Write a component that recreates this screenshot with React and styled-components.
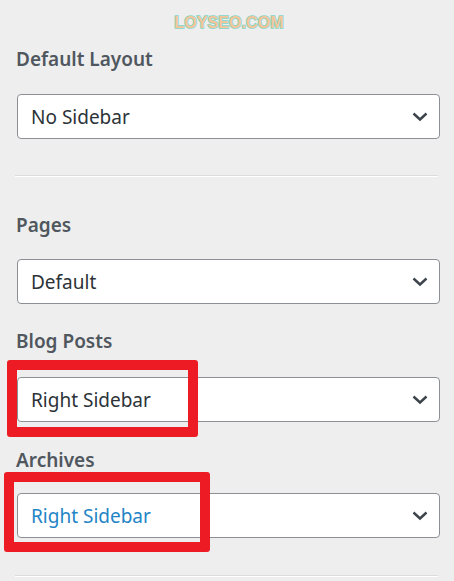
import React from 'react';
import styled, { createGlobalStyle } from 'styled-components';

const GlobalStyle = createGlobalStyle`
  html, body {
    margin: 0;
    padding: 0;
    background: #eeeeee;
  }
  body {
    font-family: "Noto Sans", "Open Sans", sans-serif;
  }
`;

const Panel = styled.div`
  width: 454px;
  height: 581px;
  overflow: hidden;
  padding: 0 14px 0 16px;
  box-sizing: border-box;
  display: flex;
  flex-direction: column;
`;

const Watermark = styled.div`
  height: 46px;
  display: flex;
  align-items: center;
  justify-content: center;
  padding-left: 2px;
  font-family: "Liberation Sans", Arial, sans-serif;
  font-weight: 700;
  font-size: 16px;
  letter-spacing: 0.1px;
  color: #f5c69a;
  -webkit-text-stroke: 1.6px #83d5c6;
  paint-order: stroke fill;
`;

const Section = styled.div`
  display: flex;
  flex-direction: column;
  padding-top: ${(p) => p.$top || 0}px;
`;

const Label = styled.div`
  font-size: 19px;
  font-weight: 600;
  color: #50575e;
  line-height: 26px;
  margin-bottom: ${(p) => p.$gap || 16}px;
`;

const SelectWrap = styled.div`
  position: relative;
  margin-left: 1px;
`;

const SelectBox = styled.div`
  height: 45px;
  box-sizing: border-box;
  border: 1px solid #8c8f94;
  border-radius: 4px;
  background: #fff;
  display: flex;
  align-items: center;
  justify-content: space-between;
  padding: 0 11px 0 13px;
  font-size: 19px;
  color: ${(p) => (p.$active ? '#2384c6' : '#2c3338')};
`;

const Chevron = () => (
  <svg width="16" height="10" viewBox="0 0 16 10">
    <path d="M1.5 1.5 L8 7.5 L14.5 1.5" fill="none" stroke="#3c434a" strokeWidth="2.4" />
  </svg>
);

const Highlight = styled.div`
  position: absolute;
  left: ${(p) => p.$left}px;
  top: ${(p) => p.$top}px;
  width: ${(p) => p.$width}px;
  height: ${(p) => p.$height}px;
  border: 10px solid #ed1c24;
  border-radius: 3px;
  box-sizing: border-box;
  pointer-events: none;
`;

const Divider = styled.div`
  height: 1px;
  background: #dcdcde;
  border-bottom: 1px solid #ffffff;
  margin-left: -1px;
  margin-right: 2px;
  margin-top: ${(p) => p.$top}px;
`;

const Field = ({ label, value, active, top, gap, mark }) => (
  <Section $top={top}>
    <Label $gap={gap}>{label}</Label>
    <SelectWrap>
      <SelectBox $active={active}>
        <span>{value}</span>
        <Chevron />
      </SelectBox>
      {mark && <Highlight {...mark} />}
    </SelectWrap>
  </Section>
);

export default function App() {
  return (
    <>
      <GlobalStyle />
      <Panel>
        <Watermark>LOYSEO.COM</Watermark>
        <Field label="Default Layout" value="No Sidebar" top={0} gap={22} />
        <Divider $top={36} />
        <Field label="Pages" value="Default" top={35} gap={21} />
        <Field label="Blog Posts" value="Right Sidebar" top={24} gap={23} mark={{ $left: -10, $top: -17, $width: 191, $height: 77 }} />
        <Field label="Archives" value="Right Sidebar" active top={25} gap={20} mark={{ $left: -13, $top: -21, $width: 206, $height: 80 }} />
        <Divider $top={37} />
      </Panel>
    </>
  );
}
